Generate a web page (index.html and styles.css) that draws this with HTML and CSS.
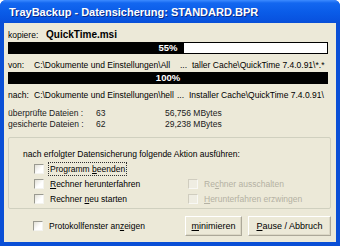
FILE: index.html
```html
<!DOCTYPE html>
<html lang="de">
<head>
    <meta charset="UTF-8">
    <title>TrayBackup</title>
    <link rel="stylesheet" href="styles.css">
</head>
<body>
<div class="window">
    <div class="titlebar">
        <span class="title">TrayBackup - Datensicherung: STANDARD.BPR</span>
    </div>
    <div class="client">
        <div class="row">
            <span class="lbl-copy">kopiere:</span>
            <b class="file">QuickTime.msi</b>
        </div>
        <div class="bar">
            <div class="bar-fill" style="width:55%"></div>
            <span class="bar-text">55%</span>
        </div>
        <div class="row">
            <span class="lbl-path">von:</span>
            <span class="path-a">C:\Dokumente und Einstellungen\All</span>
            <span class="dots">...</span>
            <span>taller Cache\QuickTime 7.4.0.91\*.*</span>
        </div>
        <div class="bar">
            <div class="bar-fill" style="width:100%"></div>
            <span class="bar-text">100%</span>
        </div>
        <div class="row">
            <span class="lbl-path">nach:</span>
            <span class="path-b">C:\Dokumente und Einstellungen\hell</span>
            <span class="dots">...</span>
            <span>Installer Cache\QuickTime 7.4.0.91\</span>
        </div>
        <div class="stats">
            <span>überprüfte Dateien :</span><span>63</span><span>56,756 MBytes</span>
            <span>gesicherte Dateien :</span><span>62</span><span>29,238 MBytes</span>
        </div>
        <div class="group">
            <div class="group-head">nach erfolgter Datensicherung folgende Aktion ausführen:</div>
            <div class="options">
                <label class="check"><span class="box"></span><span class="focus">Programm <u>b</u>eenden</span></label>
                <span></span>
                <label class="check"><span class="box"></span><span><u>R</u>echner herunterfahren</span></label>
                <label class="check off"><span class="box"></span><span>Re<u>c</u>hner ausschalten</span></label>
                <label class="check"><span class="box"></span><span>Rechner <u>n</u>eu starten</span></label>
                <label class="check off"><span class="box"></span><span><u>H</u>erunterfahren erzwingen</span></label>
            </div>
        </div>
        <div class="footer">
            <label class="check"><span class="box"></span><span>Protokollfenster an<u>z</u>eigen</span></label>
            <button class="btn btn-min"><u>m</u>inimieren</button>
            <button class="btn btn-stop"><u>P</u>ause / Abbruch</button>
        </div>
    </div>
</div>
</body>
</html>
```

FILE: styles.css
```css
body {
    margin: 0;
    padding: 0;
    background: #ffffff;
    font-family: "Liberation Sans", Arial, sans-serif;
    font-size: 8.5px;
    color: #000000;
}
.window {
    width: 340px;
    height: 246px;
    box-sizing: border-box;
    padding: 0 4px 4px 4px;
    background: #0a4fd6;
    border-radius: 6px 6px 0 0;
    display: flex;
    flex-direction: column;
}
.titlebar {
    height: 23px;
    margin: 0 -4px;
    padding-left: 9px;
    display: flex;
    align-items: center;
    border-radius: 6px 6px 0 0;
    background: linear-gradient(#3d8bff 0px, #1367f0 3px, #0a5ce8 12px, #0853e0 20px, #0a4fd6 23px);
}
.title {
    color: #ffffff;
    font-weight: bold;
    font-size: 11px;
    text-shadow: 1px 1px 0 #0a2a8a;
}
.client {
    flex: 1;
    background: #ece9d8;
    padding: 6px 4px 0 4px;
}
.row {
    display: flex;
    height: 12px;
    line-height: 12px;
    white-space: nowrap;
}
.lbl-copy {
    width: 38px;
}
.file {
    font-size: 10px;
}
.lbl-path {
    width: 26px;
}
.path-a {
    width: 146px;
}
.path-b {
    width: 143px;
}
.dots {
    width: 12px;
}
.bar {
    position: relative;
    width: 320px;
    height: 12px;
    box-sizing: border-box;
    border: 1px solid #000000;
    background: #ffffff;
    margin: 1px 0 5px 0;
}
.bar-fill {
    height: 100%;
    background: #000000;
}
.bar-text {
    position: absolute;
    left: 0;
    right: 0;
    top: -1px;
    text-align: center;
    line-height: 12px;
    font-size: 9.5px;
    font-weight: bold;
    color: #ffffff;
}
.stats {
    display: grid;
    grid-template-columns: 88px 69px auto;
    line-height: 11px;
    margin-top: 7px;
    color: #202020;
}
.group {
    margin-top: 7px;
    width: 323px;
    height: 72px;
    box-sizing: border-box;
    border: 1px solid #d0d0bf;
    border-radius: 2px;
    padding: 10px 0 0 14px;
}
.group-head {
    line-height: 12px;
}
.options {
    display: grid;
    grid-template-columns: 154px auto;
    row-gap: 3px;
    margin-top: 3px;
    padding-left: 11px;
}
.check {
    display: flex;
    align-items: center;
    gap: 6px;
    height: 12px;
    line-height: 12px;
    white-space: nowrap;
}
.box {
    width: 10px;
    height: 10px;
    box-sizing: border-box;
    border-top: 1px solid #9a9a90;
    border-left: 1px solid #9a9a90;
    border-right: 1px solid #f4f4f0;
    border-bottom: 1px solid #f4f4f0;
    background: linear-gradient(135deg, #e2e0d6, #ffffff 60%);
}
.focus {
    outline: 1px dotted #303030;
    outline-offset: 0;
    padding: 0 1px;
    margin-left: -1px;
}
.off {
    color: #b4b1a3;
}
.off .box {
    border-color: #d0cdbf #f8f8f4 #f8f8f4 #d0cdbf;
    background: #efede2;
}
.footer {
    display: flex;
    align-items: center;
    margin-top: 7px;
    padding-left: 25px;
}
.footer .check {
    width: 152px;
}
.btn {
    height: 20px;
    padding: 0;
    font-family: "Liberation Sans", Arial, sans-serif;
    font-size: 9px;
    color: #000000;
    background: #ece9d8;
    border-top: 1px solid #ffffff;
    border-left: 1px solid #ffffff;
    border-right: 1px solid #aca899;
    border-bottom: 1px solid #aca899;
    box-shadow: inset -1px -1px 0 #dcd8c6;
}
.btn-min {
    width: 57px;
}
.btn-stop {
    width: 83px;
    margin-left: 6px;
}
```
